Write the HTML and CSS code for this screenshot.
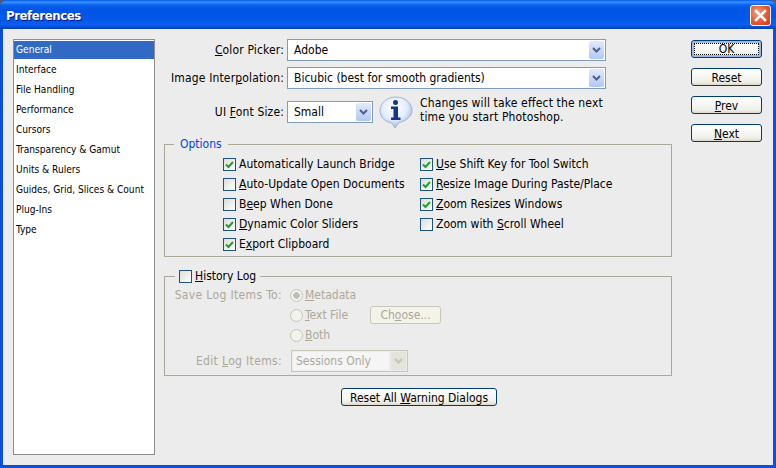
FILE: index.html
```html
<!DOCTYPE html>
<html lang="en">
<head>
<meta charset="utf-8">
<title>Preferences</title>
<link rel="stylesheet" href="styles.css">
</head>
<body>
<div class="window">
  <header class="titlebar">
    <h1 class="title">Preferences</h1>
    <button class="close" aria-label="Close">
      <svg width="19" height="19" viewBox="0 0 19 19"><path d="M5 5l9 9M14 5l-9 9" stroke="#fff" stroke-width="2.600" fill="none" stroke-linecap="square"/></svg>
    </button>
  </header>
  <div class="client">
    <ul class="nav">
      <li class="nav-item active">General</li>
      <li class="nav-item">Interface</li>
      <li class="nav-item">File Handling</li>
      <li class="nav-item">Performance</li>
      <li class="nav-item">Cursors</li>
      <li class="nav-item">Transparency &amp; Gamut</li>
      <li class="nav-item">Units &amp; Rulers</li>
      <li class="nav-item">Guides, Grid, Slices &amp; Count</li>
      <li class="nav-item">Plug-Ins</li>
      <li class="nav-item">Type</li>
    </ul>
    <main class="main">
      <div class="form-row row-color">
        <span class="form-label"><u>C</u>olor Picker:</span>
        <div class="select select-wide"><span class="select-value">Adobe</span><span class="arrow"><svg width="9" height="7" viewBox="0 0 9 7"><path d="M1 1l3.500 3.500L8 1" stroke="#4d6185" stroke-width="2" fill="none"/></svg></span></div>
      </div>
      <div class="form-row row-interp">
        <span class="form-label">Image Inter<u>p</u>olation:</span>
        <div class="select select-wide"><span class="select-value">Bicubic (best for smooth gradients)</span><span class="arrow"><svg width="9" height="7" viewBox="0 0 9 7"><path d="M1 1l3.500 3.500L8 1" stroke="#4d6185" stroke-width="2" fill="none"/></svg></span></div>
      </div>
      <div class="form-row row-font">
        <span class="form-label">UI <u>F</u>ont Size:</span>
        <div class="select select-small"><span class="select-value">Small</span><span class="arrow"><svg width="9" height="7" viewBox="0 0 9 7"><path d="M1 1l3.500 3.500L8 1" stroke="#4d6185" stroke-width="2" fill="none"/></svg></span></div>
        <svg class="info" width="34" height="33" viewBox="0 0 34 33">
          <defs>
            <radialGradient id="bub" cx="0.45" cy="0.35" r="0.7"><stop offset="0" stop-color="#fff"/><stop offset="0.55" stop-color="#e4edfb"/><stop offset="1" stop-color="#8fb0de"/></radialGradient>
          </defs>
          <path d="M17 1C8 1 1 7 1 14.500c0 6.500 5 11.500 12 12.500l3 5 4-5.500c7-1.500 13-6 13-12C33 7 26 1 17 1z" fill="url(#bub)" stroke="#9db6da" stroke-width="1"/>
          <circle cx="16.500" cy="6.500" r="2.500" fill="#12358f"/>
          <path d="M12 10.500h7v11h2.500v2.500h-9.500v-2.500h2.500v-8.500h-2.500z" fill="#12358f"/>
        </svg>
        <p class="note">Changes will take effect the next<br>time you start Photoshop.</p>
      </div>
      <fieldset class="group group-options">
        <legend class="legend-options">Options</legend>
        <div class="check-grid">
          <div class="check-col col-a">
            <label class="check"><span class="box on"><svg width="11" height="11" viewBox="0 0 11 11"><path d="M2 5.500l2.500 2.500L9 3" stroke="#21a121" stroke-width="2" fill="none"/></svg></span><span>Automatically Launch Brid<u>g</u>e</span></label>
            <label class="check"><span class="box"></span><span><u>A</u>uto-Update Open Documents</span></label>
            <label class="check"><span class="box"></span><span>B<u>e</u>ep When Done</span></label>
            <label class="check"><span class="box on"><svg width="11" height="11" viewBox="0 0 11 11"><path d="M2 5.500l2.500 2.500L9 3" stroke="#21a121" stroke-width="2" fill="none"/></svg></span><span><u>D</u>ynamic Color Sliders</span></label>
            <label class="check"><span class="box on"><svg width="11" height="11" viewBox="0 0 11 11"><path d="M2 5.500l2.500 2.500L9 3" stroke="#21a121" stroke-width="2" fill="none"/></svg></span><span>E<u>x</u>port Clipboard</span></label>
          </div>
          <div class="check-col">
            <label class="check"><span class="box on"><svg width="11" height="11" viewBox="0 0 11 11"><path d="M2 5.500l2.500 2.500L9 3" stroke="#21a121" stroke-width="2" fill="none"/></svg></span><span><u>U</u>se Shift Key for Tool Switch</span></label>
            <label class="check"><span class="box on"><svg width="11" height="11" viewBox="0 0 11 11"><path d="M2 5.500l2.500 2.500L9 3" stroke="#21a121" stroke-width="2" fill="none"/></svg></span><span><u>R</u>esize Image During Paste/Place</span></label>
            <label class="check"><span class="box on"><svg width="11" height="11" viewBox="0 0 11 11"><path d="M2 5.500l2.500 2.500L9 3" stroke="#21a121" stroke-width="2" fill="none"/></svg></span><span><u>Z</u>oom Resizes Windows</span></label>
            <label class="check"><span class="box"></span><span>Zoom with <u>S</u>croll Wheel</span></label>
          </div>
        </div>
      </fieldset>
      <fieldset class="group group-history">
        <legend class="legend-history"><span class="box"></span><span><u>H</u>istory Log</span></legend>
        <div class="save-row">
          <span class="dim-label">Save Log Items To:</span>
          <div class="radios">
            <div class="radio-row"><span class="radio on"></span><span class="dim"><u>M</u>etadata</span></div>
            <div class="radio-row"><span class="radio"></span><span class="dim dim-fixed"><u>T</u>ext File</span><span class="btn-disabled">Ch<u>o</u>ose...</span></div>
            <div class="radio-row"><span class="radio"></span><span class="dim"><u>B</u>oth</span></div>
          </div>
        </div>
        <div class="edit-row">
          <span class="dim-label">Edit <u>L</u>og Items:</span>
          <div class="select-disabled"><span class="select-value">Sessions Only</span><span class="arrow-disabled"><svg width="9" height="7" viewBox="0 0 9 7"><path d="M1 1l3.500 3.500L8 1" stroke="#c4c4ba" stroke-width="2" fill="none"/></svg></span></div>
        </div>
      </fieldset>
      <div class="reset-row"><button class="btn btn-reset">Reset All <u>W</u>arning Dialogs</button></div>
    </main>
    <div class="actions">
      <button class="btn btn-default"><span class="focus">OK</span></button>
      <button class="btn">Reset</button>
      <button class="btn"><u>P</u>rev</button>
      <button class="btn"><u>N</u>ext</button>
    </div>
  </div>
</div>
</body>
</html>
```
FILE: styles.css
```css
* { box-sizing: border-box; }
html, body { margin: 0; padding: 0; width: 776px; height: 468px; overflow: hidden; background: #4a5a7a; }
body, button { font: 12px/14px "DejaVu Sans Condensed", "DejaVu Sans", sans-serif; color: #000; }
u { text-underline-offset: 1px; }

.window {
  width: 776px; height: 468px; display: flex; flex-direction: column;
  background: #0a50e0; border-radius: 7px 7px 0 0; overflow: hidden;
}
.titlebar {
  height: 29px; flex: none; display: flex; align-items: center; justify-content: space-between;
  padding: 2px 5px 0 6px;
  background: linear-gradient(#0058ee 0, #3a93ff 2px, #0a62f0 5px, #0055e5 10px, #0258ea 20px, #0a5ff0 25px, #0046c0 28px, #003cae 29px);
}
.title { margin: 1px 0 0; font: bold 13px/16px "DejaVu Sans Condensed", "DejaVu Sans", sans-serif; letter-spacing: -0.4px; color: #fff; text-shadow: 1px 1px 0 #0f1089; }
.close {
  width: 21px; height: 21px; padding: 0; border: 1px solid #fff; border-radius: 3px;
  background: radial-gradient(circle at 35% 35%, #f0a080, #e2582f 55%, #c83a15);
  display: flex;
}
.client {
  flex: 1; margin: 0 3px 3px 3px; background: #ececec; display: flex;
  padding: 10px 11px 10px 10px;
}
.nav {
  list-style: none; margin: 0; padding: 1px 0 0 0; width: 142px; height: 416px; flex: none;
  background: #fff; border: 1px solid #8d8d8d;
}
.nav-item { height: 20px; padding: 0 2px; line-height: 18px; font-size: 10.100px; white-space: nowrap; }
.nav-item.active { background: #316ac5; color: #fff; height: 18px; margin-bottom: 2px; }

.main { width: 508px; margin-left: 9px; flex: none; display: flex; flex-direction: column; }
.form-row { display: flex; align-items: center; }
.form-label { width: 123px; padding-right: 3px; text-align: right; flex: none; letter-spacing: 0.15px; }
.row-color, .row-interp { height: 22px; margin-bottom: 6px; }
.row-font { height: 22px; margin-top: 6px; }

.select {
  height: 22px; background: #fff; border: 1px solid #7f9db9; display: flex; align-items: center;
  justify-content: space-between; padding: 1px; flex: none;
}
.select-wide { width: 319px; }
.select-small { width: 86px; }
.select-value { padding-left: 5px; }
.arrow {
  width: 15px; height: 18px; background: linear-gradient(#e0e9fd, #b3c7f6);
  border-radius: 2px; display: flex; align-items: center; justify-content: center;
}
.info { margin-left: 6px; flex: none; }
.note { margin: -4px 0 0 7px; line-height: 14px; letter-spacing: 0.15px; white-space: nowrap; }

.group { margin: 0; padding: 0; border: 1px solid #aca899; min-width: 0; }
.group-options { height: 120px; margin-top: 14px; }
.legend-options { margin-left: 9px; padding: 0 6px; color: #0046d5; }
.check-grid { display: flex; padding: 3px 0 0 58px; }
.col-a { width: 197px; flex: none; }
.check-col { display: flex; flex-direction: column; }
.check { height: 20px; display: flex; align-items: center; gap: 3px; white-space: nowrap; }
.box {
  width: 13px; height: 13px; border: 1px solid #1c5180; background: linear-gradient(135deg, #dcdcd7, #fff);
  flex: none; display: flex; align-items: center; justify-content: center;
}

.group-history { height: 107px; margin-top: 12px; }
.legend-history { margin-left: 10px; padding: 0 4px; display: flex; align-items: center; gap: 3px; }
.save-row { display: flex; padding-top: 2px; }
.dim-label { width: 117px; text-align: right; color: #aca899; flex: none; letter-spacing: 0.35px; }
.save-row .dim-label { padding-top: 3px; }
.radios { margin-left: 8px; display: flex; flex-direction: column; }
.radio-row { height: 20px; display: flex; align-items: center; gap: 2px; }
.radio { width: 13px; height: 13px; border: 1px solid #c5c5ba; border-radius: 50%; background: #f3f3ee; flex: none; }
.radio.on { background: radial-gradient(circle, #bdbdb5 0 3px, #f3f3ee 3.500px); }
.dim { color: #aca899; }
.dim-fixed { width: 63px; }
.btn-disabled {
  width: 71px; height: 18px; border: 1px solid #c9c7ba; border-radius: 3px; background: #f3f3ea;
  color: #aca899; text-align: center; line-height: 16px;
}
.edit-row { display: flex; align-items: center; margin-top: 5px; }
.select-disabled {
  width: 117px; height: 22px; margin-left: 9px; border: 1px solid #c9c7ba; background: #ececec; padding: 1px;
  display: flex; justify-content: space-between; align-items: center; color: #aca899;
}
.select-disabled .select-value { flex: 1; height: 18px; line-height: 18px; background: #f5f5f5; padding-left: 3px; }
.arrow-disabled { width: 15px; height: 18px; margin-left: 2px; background: #e4e4dc; display: flex; align-items: center; justify-content: center; }

.reset-row { display: flex; justify-content: center; margin-top: 12px; padding-left: 2px; }
.btn {
  width: 71px; height: 18px; padding: 1px 0 0; border: 1px solid #003c74; border-radius: 3px;
  background: linear-gradient(#fff, #f0f0ea 80%, #dcd8cc); color: #000; text-align: center;
}
.btn-reset { width: 156px; }
.actions { margin: 1px 0 0 19px; display: flex; flex-direction: column; gap: 10px; }
.btn-default { box-shadow: inset 0 0 0 2px #9db9e8; padding: 2px; }
.focus { display: block; height: 100%; line-height: 12px; outline: 1px dotted #000; outline-offset: -1px; }
```
